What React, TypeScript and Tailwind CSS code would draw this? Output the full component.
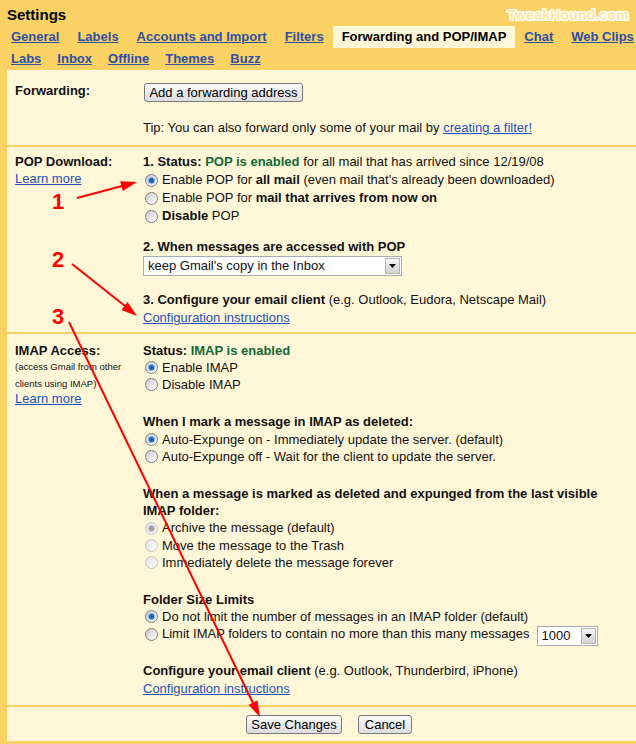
import type { ReactNode } from "react";

const ROW1 = ["General", "Labels", "Accounts and Import", "Filters", "Forwarding and POP/IMAP", "Chat", "Web Clips"];
const ROW2 = ["Labs", "Inbox", "Offline", "Themes", "Buzz"];
const ACTIVE = "Forwarding and POP/IMAP";

function Tab({ name, pad }: { name: string; pad: string }) {
  if (name === ACTIVE) {
    return (
      <span className={`flex h-full shrink-0 items-center whitespace-nowrap bg-[#fff7d7] font-bold text-black ${pad}`}>
        {name}
      </span>
    );
  }
  return (
    <a href="#" className={`shrink-0 whitespace-nowrap font-bold text-[#2f4fa8] underline ${pad}`}>
      {name}
    </a>
  );
}

function Radio({ checked, disabled }: { checked?: boolean; disabled?: boolean }) {
  return (
    <span
      className={`ml-[2px] mr-[4px] flex h-[13px] w-[13px] shrink-0 items-center justify-center rounded-full border ${
        disabled
          ? "border-[#c2c2c2] bg-linear-to-br from-[#e4e4e4] to-[#fcfcfc]"
          : "border-[#7d7d7d] bg-linear-to-br from-[#cbcbcb] to-white"
      }`}
    >
      {checked && (
        <span
          className={`h-[5px] w-[5px] rounded-full ${
            disabled ? "bg-[#9b9b9b] shadow-[0_0_1px_1px_#c9c9c9]" : "bg-[#1d5fb5] shadow-[0_0_1px_1px_#7fb2ec]"
          }`}
        />
      )}
    </span>
  );
}

function Arrow() {
  return (
    <span className="mr-[1px] flex h-[16px] w-[15px] items-center justify-center border border-[#b4b4b4] bg-linear-to-b from-[#f6f6f6] to-[#d2d2d2]">
      <svg width="7" height="4" viewBox="0 0 7 4">
        <polygon points="0,0 7,0 3.5,4" fill="#000" />
      </svg>
    </span>
  );
}

function Select({ value, width }: { value: string; width: string }) {
  return (
    <span className={`flex h-[20px] items-center border border-[#a5acb2] bg-white pl-[4px] ${width}`}>
      <span className="flex-1 whitespace-nowrap">{value}</span>
      <Arrow />
    </span>
  );
}

function Button({ children, width }: { children: ReactNode; width: string }) {
  return (
    <button
      className={`flex h-[19px] items-center justify-center rounded-[3px] border border-[#7a7a7a] bg-linear-to-b from-[#fbfbfb] to-[#dcdcdc] text-[13px] leading-none text-black ${width}`}
    >
      {children}
    </button>
  );
}

function Link({ children }: { children: ReactNode }) {
  return (
    <a href="#" className="text-[#2450bd] underline">
      {children}
    </a>
  );
}

function PopLine({ children }: { children: ReactNode }) {
  return <div className="flex h-[18px] items-center whitespace-nowrap">{children}</div>;
}

function ImapLine({ children }: { children: ReactNode }) {
  return <div className="flex h-[17.2px] items-center whitespace-nowrap">{children}</div>;
}

function Overlay() {
  return (
    <svg className="pointer-events-none absolute left-0 top-0" width="636" height="744" viewBox="0 0 636 744">
      <g stroke="#ff0000" strokeWidth="2" fill="none">
        <line x1="77" y1="198" x2="122" y2="186" />
        <line x1="72" y1="264" x2="125" y2="306" />
        <line x1="69" y1="322" x2="253" y2="703" />
      </g>
      <g fill="#ff0000">
        <polygon points="137,182 122.8,191 120.2,181.3" />
        <polygon points="137,316 121.4,309.9 127.6,302.1" />
        <polygon points="260,717 248.5,704.8 257.5,700.4" />
      </g>
      <g fill="#ff0000" fontFamily="'Liberation Sans', Arial, sans-serif" fontWeight="bold" fontSize="22">
        <text x="52" y="209">1</text>
        <text x="52" y="267">2</text>
        <text x="52" y="324">3</text>
      </g>
    </svg>
  );
}

export default function App() {
  return (
    <div className="relative h-[744px] w-[636px] overflow-hidden bg-[#fad163] font-['Liberation_Sans',Arial,sans-serif] text-[13px] text-[#111]">
      {/* header */}
      <div className="flex h-[26px] items-center justify-between pl-[7px] pr-[7px] pt-1">
        <span className="text-[15px] font-bold text-black">Settings</span>
        <span className="text-[14px] font-bold tracking-[0.2px] text-[#fde7a6] [text-shadow:1px_0_0_#fff,-1px_0_0_#fff,0_1px_0_#fff,0_-1px_0_#fff,1px_1px_0_#fff,-1px_-1px_0_#fff,1px_-1px_0_#fff,-1px_1px_0_#fff,0_0_3px_#fff]">
          TweakHound.com
        </span>
      </div>
      <div className="flex h-[22px] items-center overflow-hidden pl-[2px]">
        {ROW1.map((t) => (
          <Tab key={t} name={t} pad="px-[9px]" />
        ))}
      </div>
      <div className="flex h-[22px] items-center pl-[3px]">
        {ROW2.map((t) => (
          <Tab key={t} name={t} pad="px-2" />
        ))}
      </div>

      {/* panel */}
      <div className="ml-[7px] h-[671px] bg-[#fff7d7]">
        {/* forwarding */}
        <div className="grid h-[75px] grid-cols-[128px_1fr] pl-[8px]">
          <div className="pt-[12px]">
            <div className="flex h-[18px] items-center font-bold">Forwarding:</div>
          </div>
          <div className="pt-[13px]">
            <Button width="w-[159px] ml-[1px]">Add a forwarding address</Button>
            <div className="mt-[17px] flex h-[18px] items-center whitespace-nowrap">
              Tip: You can also forward only some of your mail by&nbsp;<Link>creating a filter!</Link>
            </div>
          </div>
        </div>
        <div className="h-[2px] bg-[#fad163]" />

        {/* POP */}
        <div className="grid h-[185px] grid-cols-[128px_1fr] pl-[8px] pt-[6px]">
          <div>
            <div className="flex h-[17px] items-center font-bold">POP Download:</div>
            <div className="flex h-[17px] items-center">
              <Link>Learn more</Link>
            </div>
          </div>
          <div>
            <PopLine>
              <b>1. Status:&nbsp;</b>
              <b className="text-[#0f6a37]">POP is enabled</b>&nbsp;for all mail that has arrived since 12/19/08
            </PopLine>
            <PopLine>
              <Radio checked />
              Enable POP for&nbsp;<b>all mail</b>&nbsp;(even mail that's already been downloaded)
            </PopLine>
            <PopLine>
              <Radio />
              Enable POP for&nbsp;<b>mail that arrives from now on</b>
            </PopLine>
            <PopLine>
              <Radio />
              <b>Disable</b>&nbsp;POP
            </PopLine>
            <div className="mt-[13px]">
              <PopLine>
                <b>2. When messages are accessed with POP</b>
              </PopLine>
            </div>
            <Select value="keep Gmail's copy in the Inbox" width="w-[259px]" />
            <div className="mt-[15px]">
              <PopLine>
                <b>3. Configure your email client</b>&nbsp;(e.g. Outlook, Eudora, Netscape Mail)
              </PopLine>
              <PopLine>
                <Link>Configuration instructions</Link>
              </PopLine>
            </div>
          </div>
        </div>
        <div className="h-[2px] bg-[#fad163]" />

        {/* IMAP */}
        <div className="grid h-[371px] grid-cols-[128px_1fr] pl-[8px] pt-[8px]">
          <div>
            <div className="flex h-[17.2px] items-center font-bold">IMAP Access:</div>
            <div className="flex h-[16.5px] items-center text-[9.5px]">(access Gmail from other</div>
            <div className="flex h-[16.5px] items-center text-[9.5px]">clients using IMAP)</div>
            <div className="leading-[13px]">
              <Link>Learn more</Link>
            </div>
          </div>
          <div>
            <ImapLine>
              <b>Status:&nbsp;</b>
              <b className="text-[#0f6a37]">IMAP is enabled</b>
            </ImapLine>
            <ImapLine>
              <Radio checked />
              Enable IMAP
            </ImapLine>
            <ImapLine>
              <Radio />
              Disable IMAP
            </ImapLine>

            <div className="mt-[20px]">
              <ImapLine>
                <b>When I mark a message in IMAP as deleted:</b>
              </ImapLine>
              <ImapLine>
                <Radio checked />
                Auto-Expunge on - Immediately update the server. (default)
              </ImapLine>
              <ImapLine>
                <Radio />
                Auto-Expunge off - Wait for the client to update the server.
              </ImapLine>
            </div>

            <div className="mt-[20px]">
              <ImapLine>
                <b>When a message is marked as deleted and expunged from the last visible</b>
              </ImapLine>
              <ImapLine>
                <b>IMAP folder:</b>
              </ImapLine>
              <ImapLine>
                <Radio checked disabled />
                Archive the message (default)
              </ImapLine>
              <ImapLine>
                <Radio disabled />
                Move the message to the Trash
              </ImapLine>
              <ImapLine>
                <Radio disabled />
                Immediately delete the message forever
              </ImapLine>
            </div>

            <div className="mt-[20px]">
              <ImapLine>
                <b>Folder Size Limits</b>
              </ImapLine>
              <ImapLine>
                <Radio checked />
                Do not limit the number of messages in an IMAP folder (default)
              </ImapLine>
              <ImapLine>
                <Radio />
                Limit IMAP folders to contain no more than this many messages
                <span className="ml-[7px] mt-[4px]">
                  <Select value="1000" width="w-[61px] h-[19px]" />
                </span>
              </ImapLine>
            </div>

            <div className="mt-[20px]">
              <ImapLine>
                <b>Configure your email client</b>&nbsp;(e.g. Outlook, Thunderbird, iPhone)
              </ImapLine>
              <ImapLine>
                <Link>Configuration instructions</Link>
              </ImapLine>
            </div>
          </div>
        </div>
        <div className="h-[2px] bg-[#fad163]" />

        {/* buttons */}
        <div className="flex h-[32px] gap-4 pl-[239px] pt-[8px]">
          <Button width="w-[96px]">Save Changes</Button>
          <Button width="w-[54px]">Cancel</Button>
        </div>
      </div>
      <Overlay />
    </div>
  );
}
